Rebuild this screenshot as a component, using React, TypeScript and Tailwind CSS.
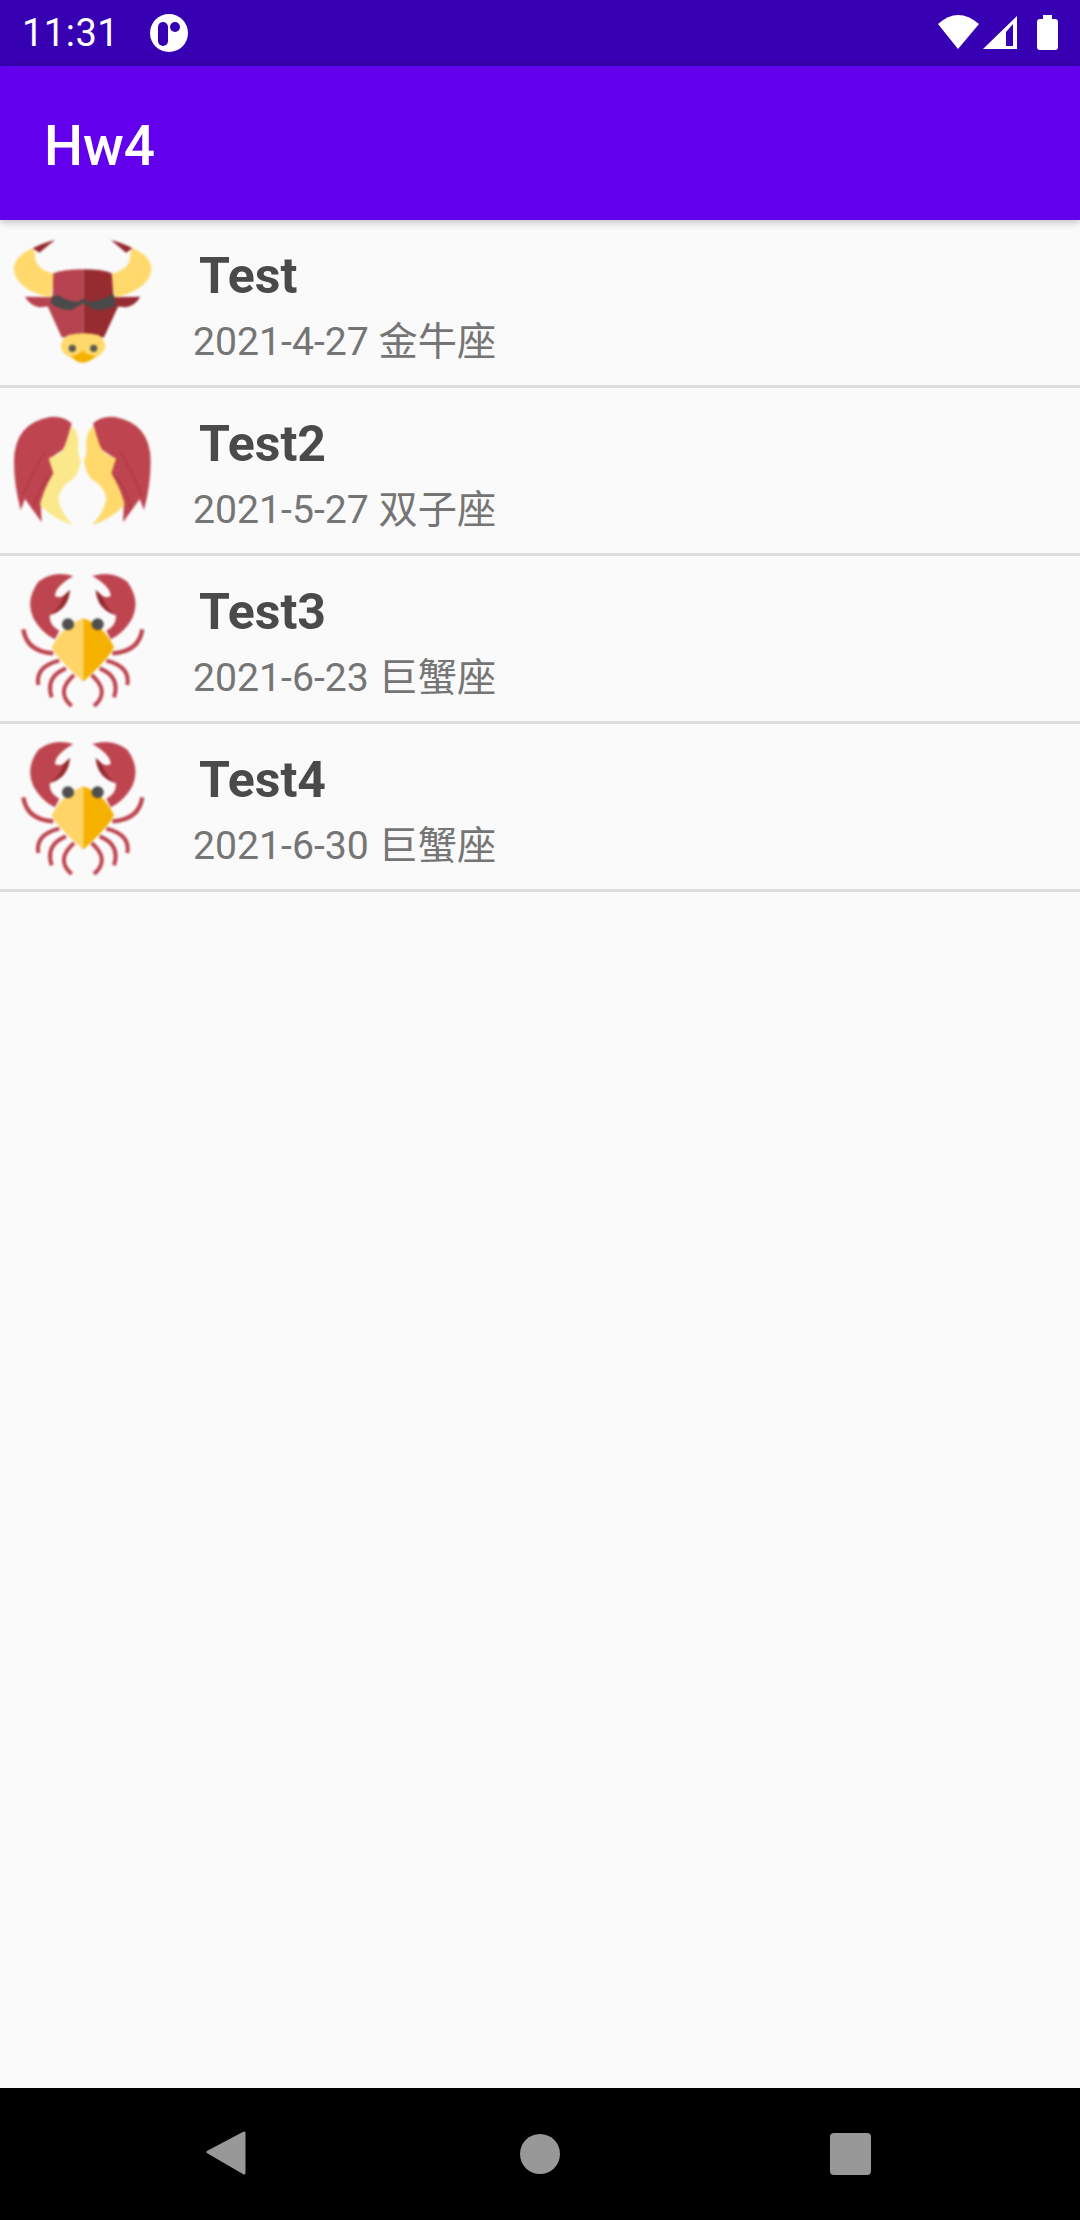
import React from 'react';

const FONT = "font-['Roboto','Noto_Sans_CJK_SC',sans-serif]";

const Bull = () => (
  <svg width="180" height="166" viewBox="0 0 540 498" className="shrink-0 blur-[1px]">
    <path d="M75 230 L160 232 L160 258 L118 262 Q90 256 75 230Z" fill="#B84350" />
    <path d="M421 230 L336 232 L336 258 L378 262 Q406 256 421 230Z" fill="#962B30" />
    <path d="M98 85 Q125 70 165 60 Q140 80 118 98Z" fill="#962B30" />
    <path d="M398 85 Q371 70 333 60 Q356 80 378 98Z" fill="#962B30" />
    <path d="M98 85 C60 100 40 125 42 150 C45 190 95 222 152 232 L165 162 Q105 150 105 105 Q105 92 98 85Z" fill="#FFD96B" />
    <path d="M398 85 C436 100 456 125 454 150 C451 190 401 222 344 232 L331 162 Q391 150 391 105 Q391 92 398 85Z" fill="#FFD96B" />
    <path d="M250 148 Q190 148 160 160 L158 225 L140 252 L185 352 L250 352Z" fill="#B84350" />
    <path d="M250 148 Q310 148 335 160 L340 225 L358 252 L312 352 L250 352Z" fill="#962B30" />
    <path d="M155 232 L175 225 Q200 245 235 245 L250 235 L265 245 Q300 245 340 222 L348 255 Q320 272 285 270 L250 250 L215 270 Q180 272 152 250Z" fill="#4A4A4A" />
    <path d="M205 345 Q250 335 295 345 Q318 358 315 385 Q300 418 250 422 Q196 418 183 385 Q180 358 205 345Z" fill="#FFD96B" />
    <circle cx="217" cy="385" r="11" fill="#5A5A50" />
    <circle cx="281" cy="385" r="11" fill="#5A5A50" />
    <path d="M214 408 Q235 405 248 392 Q262 405 288 408 Q268 428 248 428 Q228 428 214 408Z" fill="#F5B000" />
  </svg>
);

const GeminiHalf = ({ skin }: { skin: string }) => (
  <>
    <path d="M215 85 Q190 62 150 66 Q42 85 42 200 Q42 270 62 345 L75 312 L125 382 L122 320 L165 235 L150 190 L195 160Z" fill="#BE4550" />
    <path d="M135 170 Q100 225 68 300" fill="none" stroke="#A5333D" strokeWidth="5" opacity="0.6" />
    <path d="M150 240 Q112 285 100 340" fill="none" stroke="#A5333D" strokeWidth="5" opacity="0.6" />
    <path d="M215 92 Q238 115 235 150 Q232 180 242 196 Q236 235 222 250 Q180 275 175 310 Q180 350 218 390 Q165 375 120 330 Q130 285 160 235 L146 190 Q185 180 195 150Z" fill={skin} />
  </>
);

const Gemini = () => (
  <svg width="180" height="166" viewBox="0 -21 540 498" className="shrink-0 blur-[1px]">
    <GeminiHalf skin="#FBE88A" />
    <g transform="matrix(-1 0 0 1 494 0)">
      <GeminiHalf skin="#FFD96B" />
    </g>
  </svg>
);

const CrabHalf = () => (
  <>
    <path d="M220 48 Q160 30 115 65 Q75 120 100 175 Q125 220 165 238 L178 212 Q145 195 150 165 Q200 150 210 90 L190 108 Q175 115 165 108 Q165 80 220 48Z" fill="#BE4550" />
    <path d="M210 90 L190 108 Q185 140 150 165 Q205 150 210 90Z" fill="#962B30" />
    <path d="M70 208 Q80 275 160 280" fill="none" stroke="#BE4550" strokeWidth="13" />
    <path d="M115 375 Q105 320 178 302" fill="none" stroke="#BE4550" strokeWidth="12" />
    <path d="M155 412 Q135 350 198 325" fill="none" stroke="#BE4550" strokeWidth="12" />
    <path d="M215 438 Q165 395 222 345" fill="none" stroke="#BE4550" strokeWidth="12" />
  </>
);

const Crab = () => (
  <svg width="180" height="166" viewBox="0 -12 540 498" className="shrink-0 blur-[1px]">
    <CrabHalf />
    <g transform="matrix(-1 0 0 1 497 0)">
      <CrabHalf />
    </g>
    <path d="M250 175 Q190 195 155 262 Q170 295 250 365Z" fill="#FFD466" />
    <path d="M250 175 Q310 195 342 262 Q327 295 250 365Z" fill="#F5B000" />
    <circle cx="204" cy="193" r="18" fill="#4F4F4F" />
    <circle cx="293" cy="193" r="18" fill="#4F4F4F" />
  </svg>
);

const rows = [
  { name: 'Test', date: '2021-4-27 金牛座', icon: <Bull /> },
  { name: 'Test2', date: '2021-5-27 双子座', icon: <Gemini /> },
  { name: 'Test3', date: '2021-6-23 巨蟹座', icon: <Crab /> },
  { name: 'Test4', date: '2021-6-30 巨蟹座', icon: <Crab /> },
];

export default function App() {
  return (
    <div className={`flex h-[2220px] w-[1080px] flex-col bg-[#fafafa] ${FONT}`}>
      <div className="flex h-[66px] items-center justify-between bg-[#3700b3] text-white">
        <div className="flex items-center pl-[22px]">
          <span className="text-[38px] leading-none tracking-[0.5px]">11:31</span>
          <svg width="38" height="38" viewBox="0 0 38 38" className="ml-[31px]">
            <circle cx="19" cy="19" r="19" fill="#fff" />
            <rect x="8" y="8" width="10" height="24" rx="5" fill="#3700b3" />
            <circle cx="25" cy="13" r="5" fill="#3700b3" />
          </svg>
        </div>
        <svg width="142" height="66" viewBox="938 0 142 66">
          <path d="M938 24 Q958 6 979 24 L958 49Z" fill="#fff" />
          <path d="M983 49 L1017 16 V49Z" fill="#fff" />
          <path d="M1006 32 L1013 24 V46 H1006Z" fill="#3700b3" />
          <path d="M1043 15 H1052 V19 H1055 Q1058 19 1058 22 V47 Q1058 50 1055 50 H1040 Q1037 50 1037 47 V22 Q1037 19 1040 19 H1043Z" fill="#fff" />
        </svg>
      </div>
      <header className="relative flex h-[154px] items-center bg-[#6200ee] pt-[6px] pl-[44px] text-[55px] font-medium text-white shadow-[0_2px_8px_rgba(0,0,0,0.25)]">
        Hw4
      </header>
      <main className="flex-1">
        {rows.map(row => (
          <div key={row.name} className="flex h-[168px] items-start border-b-[3px] border-[#dedede]">
            {row.icon}
            <div className="ml-[13px] flex flex-col">
              <span className="mt-[29px] ml-[6px] text-[50px] leading-[54px] font-bold text-[#4a4a4a]">{row.name}</span>
              <span className="mt-[14px] text-[39.2px] leading-[50px] text-[#757575]">{row.date}</span>
            </div>
          </div>
        ))}
      </main>
      <nav className="flex h-[132px] items-center justify-between bg-black px-[206px]">
        <svg width="48" height="48" viewBox="0 0 48 48">
          <path d="M38 3 V43 L2 22Z" fill="#989898" stroke="#989898" strokeWidth="3" strokeLinejoin="round" />
        </svg>
        <div className="flex w-[48px] justify-center">
          <div className="h-[40px] w-[40px] rounded-full bg-[#989898]" />
        </div>
        <div className="flex w-[48px] justify-center">
          <div className="h-[42px] w-[41px] rounded-[4px] bg-[#989898]" />
        </div>
      </nav>
    </div>
  );
}
